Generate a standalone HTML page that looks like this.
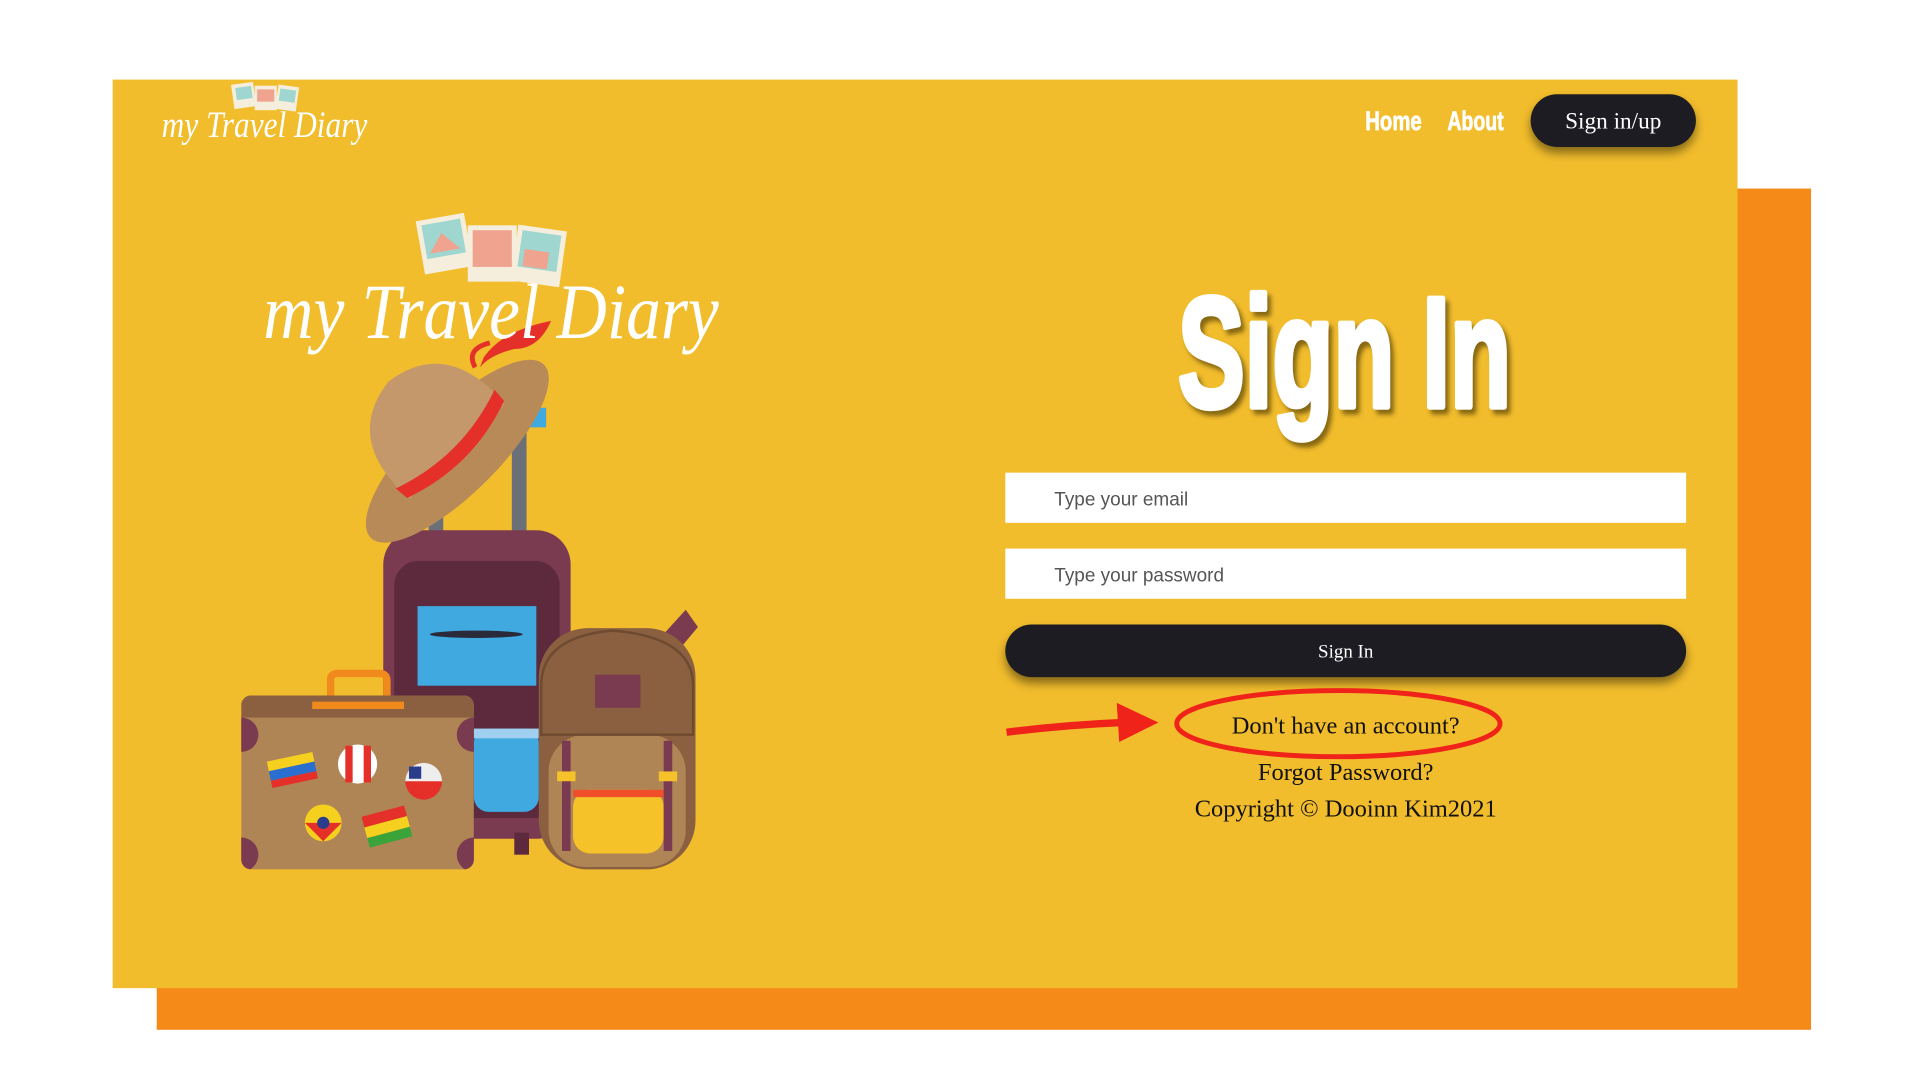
<!DOCTYPE html>
<html><head><meta charset="utf-8"><style>
html,body{margin:0;padding:0;width:1920px;height:1080px;overflow:hidden;background:#fff}
svg{display:block}
</style></head><body>
<svg width="1920" height="1080" viewBox="0 0 1568 882" preserveAspectRatio="none" xmlns="http://www.w3.org/2000/svg">
<defs>
<filter id="sh" x="-20%" y="-20%" width="140%" height="160%"><feDropShadow dx="0" dy="5" stdDeviation="4" flood-color="#000" flood-opacity="0.45"/></filter>
<filter id="ts" x="-10%" y="-10%" width="130%" height="130%"><feDropShadow dx="3" dy="4" stdDeviation="2" flood-color="#3a2a00" flood-opacity="0.6"/></filter>
<clipPath id="sc"><rect x="197" y="568" width="190" height="142" rx="8"/></clipPath>
</defs>
<rect x="128" y="154" width="1351" height="687" fill="#f58a18"/>
<rect x="92" y="65" width="1327" height="742" fill="#f2bd2c"/>

<g>
<rect x="190" y="68" width="18" height="20" fill="#f6eedd" transform="rotate(-8 199 78)"/>
<rect x="208" y="70" width="18" height="20" fill="#f6eedd"/>
<rect x="226" y="70" width="17" height="20" fill="#f6eedd" transform="rotate(8 234 80)"/>
<rect x="193" y="71" width="13" height="10" fill="#9fd6cf" transform="rotate(-8 199 78)"/>
<rect x="210" y="73" width="14" height="10" fill="#f0a38f"/>
<rect x="228" y="73" width="13" height="10" fill="#9fd6cf" transform="rotate(8 234 80)"/>
<text x="132" y="112" font-family="Liberation Serif, serif" font-style="italic" font-size="30" fill="#fff" textLength="168" lengthAdjust="spacingAndGlyphs">my Travel Diary</text>
</g>

<text x="1115" y="106" font-family="Liberation Sans Narrow, Liberation Sans, sans-serif" font-weight="bold" font-size="22" fill="#fff" stroke="#fff" stroke-width="0.6" textLength="46" lengthAdjust="spacingAndGlyphs">Home</text>
<text x="1182" y="106" font-family="Liberation Sans Narrow, Liberation Sans, sans-serif" font-weight="bold" font-size="22" fill="#fff" stroke="#fff" stroke-width="0.6" textLength="46" lengthAdjust="spacingAndGlyphs">About</text>
<rect x="1250" y="77" width="135" height="43" rx="21.5" fill="#1b1f20" filter="url(#sh)"/>
<text x="1317.5" y="105" text-anchor="middle" font-family="Liberation Serif, serif" font-size="19" fill="#fff">Sign in/up</text>

<g>
<rect x="343" y="177" width="40" height="44" fill="#f6eedd" transform="rotate(-10 363 199)"/>
<rect x="347" y="181" width="32" height="28" fill="#9fd6cf" transform="rotate(-10 363 199)"/>
<path d="M350 205 L362 190 L375 205 Z" fill="#f0a38f" transform="rotate(-10 363 199)"/>
<rect x="382" y="184" width="40" height="46" fill="#f6eedd"/>
<rect x="386" y="188" width="32" height="30" fill="#f0a38f"/>
<rect x="420" y="186" width="40" height="46" fill="#f6eedd" transform="rotate(8 440 209)"/>
<rect x="424" y="190" width="32" height="30" fill="#9fd6cf" transform="rotate(8 440 209)"/>
<rect x="428" y="205" width="20" height="14" fill="#f0a38f" transform="rotate(8 440 209)"/>
</g>

<g>
<rect x="350" y="340" width="12" height="100" fill="#6b6f78"/>
<rect x="418" y="340" width="12" height="100" fill="#6b6f78"/>
<rect x="428" y="333" width="18" height="16" fill="#3fa9e0"/>
<rect x="313" y="433" width="153" height="252" rx="28" fill="#7a3a50"/>
<rect x="322" y="458" width="135" height="210" rx="20" fill="#5c2a3c"/>
<rect x="341" y="495" width="97" height="65" fill="#3fa9e0"/>
<ellipse cx="389" cy="518" rx="38" ry="3" fill="#2a2a3a"/>
<rect x="387" y="595" width="53" height="68" rx="12" fill="#3fa9e0"/>
<rect x="387" y="595" width="53" height="8" fill="#9fd0f0"/>
<rect x="420" y="680" width="12" height="18" fill="#5c2a3c"/>
<path d="M540 520 L560 498 L570 512 L555 530 Z" fill="#7a3a50"/>
<rect x="440" y="513" width="128" height="197" rx="40" fill="#8b6040"/>
<rect x="448" y="600" width="112" height="108" rx="30" fill="#b08556"/>
<path d="M442 560 Q442 520 500 515 Q566 520 566 560 L566 600 L442 600 Z" fill="#8b6040" stroke="#6e4a30" stroke-width="2"/>
<rect x="486" y="551" width="37" height="27" fill="#7a3a50"/>
<rect x="468" y="645" width="74" height="52" rx="14" fill="#f6c22a"/>
<rect x="468" y="645" width="74" height="6" fill="#f04f2a"/>
<rect x="459" y="605" width="7" height="90" fill="#7a3a50"/>
<rect x="542" y="605" width="7" height="90" fill="#7a3a50"/>
<rect x="455" y="630" width="15" height="8" fill="#f6c22a"/>
<rect x="538" y="630" width="15" height="8" fill="#f6c22a"/>
<path d="M270 575 L270 555 Q270 550 276 550 L310 550 Q316 550 316 556 L316 575" fill="none" stroke="#f08a1c" stroke-width="6"/>
<g clip-path="url(#sc)">
<rect x="197" y="568" width="190" height="142" fill="#b08556"/>
<rect x="197" y="568" width="190" height="18" fill="#8b6040"/>
<circle cx="197" cy="600" r="14" fill="#7a3a50"/>
<circle cx="387" cy="600" r="14" fill="#7a3a50"/>
<circle cx="197" cy="698" r="14" fill="#7a3a50"/>
<circle cx="387" cy="698" r="14" fill="#7a3a50"/>
</g>
<rect x="255" y="573" width="75" height="6" fill="#f08a1c"/>
<g transform="rotate(-12 238 630)"><rect x="220" y="618" width="38" height="8" fill="#f6d01e"/><rect x="220" y="626" width="38" height="8" fill="#2a6fd0"/><rect x="220" y="634" width="38" height="6" fill="#e5302a"/></g>
<circle cx="292" cy="624" r="16" fill="#fff"/><rect x="282" y="609" width="6" height="30" fill="#e5302a"/><rect x="297" y="609" width="6" height="30" fill="#e5302a"/>
<circle cx="346" cy="638" r="15" fill="#e5302a"/><path d="M331 638 A15 15 0 0 1 361 638 Z" fill="#eee"/><rect x="334" y="626" width="10" height="10" fill="#2a3c8c"/>
<circle cx="264" cy="672" r="15" fill="#f6d01e"/><path d="M249 672 L279 672 L264 687 Z" fill="#e5302a"/><circle cx="264" cy="672" r="5" fill="#2a3c8c"/>
<g transform="rotate(-15 316 675)"><rect x="298" y="662" width="36" height="9" fill="#e5302a"/><rect x="298" y="671" width="36" height="9" fill="#f6d01e"/><rect x="298" y="680" width="36" height="8" fill="#3aa33a"/></g>
<g transform="rotate(-45 365 360)">
<ellipse cx="365" cy="372" rx="100" ry="34" fill="#b88a58"/>
<path d="M310 372 Q305 300 365 292 Q425 300 420 372 Z" fill="#c4986a"/>
<path d="M308 358 Q365 378 422 358 L421 370 Q365 390 309 370 Z" fill="#e5302a"/>
</g>
<path d="M395 292 Q410 270 450 262 Q440 285 420 285 Q400 290 392 300 Z" fill="#e5302a"/>
<path d="M388 300 Q380 285 400 280" fill="none" stroke="#e5302a" stroke-width="4"/>
</g>
<text x="215" y="276" font-family="Liberation Serif, serif" font-style="italic" font-size="64" fill="#fff" textLength="372" lengthAdjust="spacingAndGlyphs">my Travel Diary</text>

<text x="1098" y="332" text-anchor="middle" font-family="Liberation Sans Narrow, Liberation Sans, sans-serif" font-weight="bold" font-size="128" fill="#fff" stroke="#fff" stroke-width="5" stroke-linejoin="round" textLength="272" lengthAdjust="spacingAndGlyphs" filter="url(#ts)">Sign In</text>

<rect x="821" y="386" width="556" height="41" fill="#fff"/>
<text x="861" y="413" font-family="Liberation Sans, sans-serif" font-size="15.5" fill="#555">Type your email</text>
<rect x="821" y="448" width="556" height="41" fill="#fff"/>
<text x="861" y="475" font-family="Liberation Sans, sans-serif" font-size="15.5" fill="#555">Type your password</text>
<rect x="821" y="510" width="556" height="43" rx="21.5" fill="#1b1f20" filter="url(#sh)"/>
<text x="1099" y="537" text-anchor="middle" font-family="Liberation Serif, serif" font-size="15.5" fill="#fff">Sign In</text>

<ellipse cx="1093" cy="591" rx="132" ry="27" fill="none" stroke="#f0231a" stroke-width="4"/>
<path d="M822 598 Q870 592 918 590" fill="none" stroke="#f0231a" stroke-width="6"/>
<path d="M912 574 L946 590 L914 606 Z" fill="#f0231a"/>
<text x="1099" y="599" text-anchor="middle" font-family="Liberation Serif, serif" font-size="20" fill="#111">Don't have an account?</text>
<text x="1099" y="637" text-anchor="middle" font-family="Liberation Serif, serif" font-size="20" fill="#111">Forgot Password?</text>
<text x="1099" y="667" text-anchor="middle" font-family="Liberation Serif, serif" font-size="20" fill="#111">Copyright © Dooinn Kim2021</text>
</svg>
</body></html>
